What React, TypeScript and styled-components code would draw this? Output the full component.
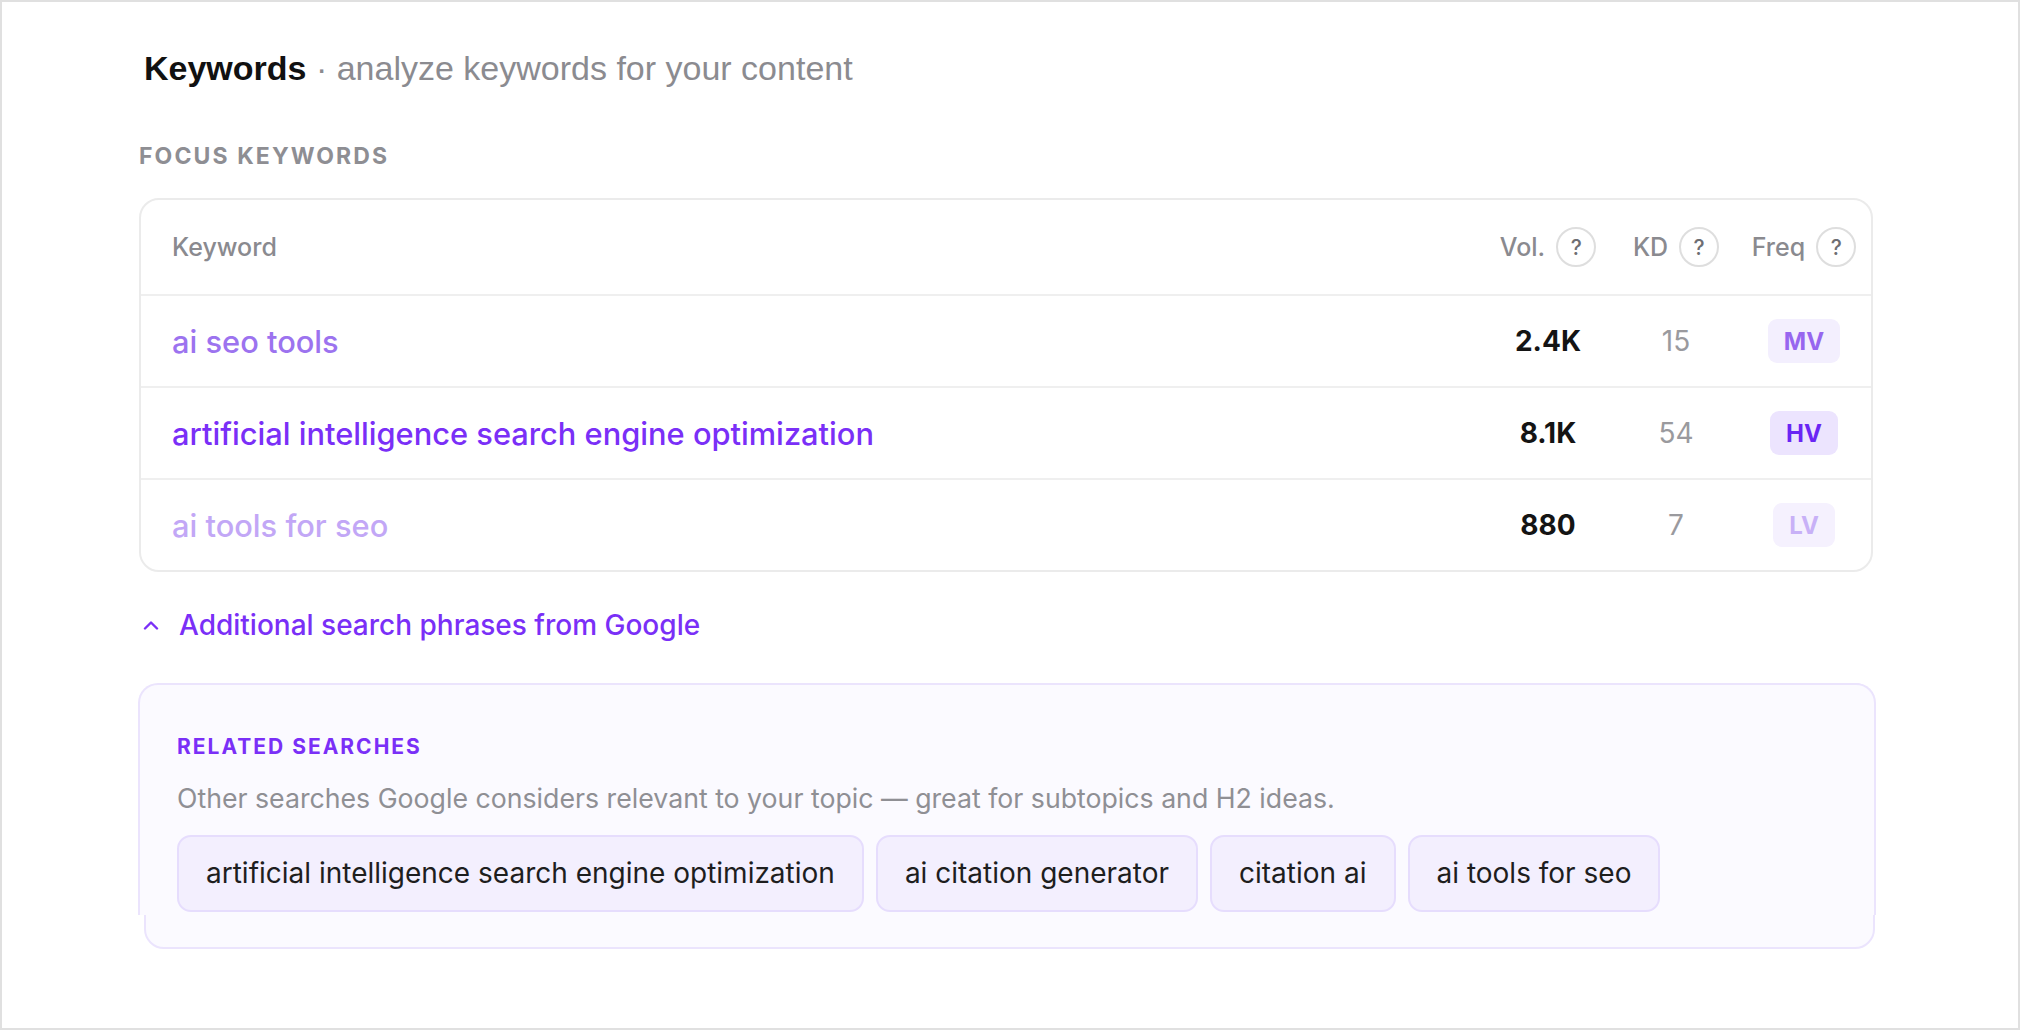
import React, { FC } from "react";
import styled, { createGlobalStyle } from "styled-components";

const GlobalStyle = createGlobalStyle`
  html, body {
    margin: 0;
    padding: 0;
    background: #ffffff;
  }
  * {
    box-sizing: border-box;
  }
`;

const Frame = styled.main`
  width: 2020px;
  height: 1030px;
  border: 2px solid #e0e0e0;
  background: #ffffff;
  padding: 46px 0 0 137px;
  font-family: Inter, "Liberation Sans", sans-serif;
`;

const Content = styled.div`
  width: 1734px;
  display: flex;
  flex-direction: column;
`;

const Title = styled.h1`
  margin: 0 0 0 5px;
  font-family: "Liberation Sans", Arial, sans-serif;
  font-size: 34px;
  line-height: 40px;
  font-weight: 400;
  color: #8b8b90;

  strong {
    color: #111111;
    font-weight: 700;
  }
`;

const SectionLabel = styled.h2<{ $accent?: boolean }>`
  margin: 0;
  font-size: ${p => (p.$accent ? "21px" : "23px")};
  line-height: ${p => (p.$accent ? "24px" : "28px")};
  font-weight: 700;
  letter-spacing: ${p => (p.$accent ? "2px" : "2.1px")};
  text-transform: uppercase;
  color: ${p => (p.$accent ? "#7a2ff7" : "#8e8e93")};
`;

const FocusLabel = styled(SectionLabel)`
  margin-top: 54px;
`;

const Table = styled.section`
  margin-top: 28px;
  border: 2px solid #ebebeb;
  border-radius: 20px;
  overflow: hidden;
`;

const Row = styled.div<{ $head?: boolean }>`
  display: grid;
  grid-template-columns: 1fr 128px 128px 128px;
  align-items: center;
  height: ${p => (p.$head ? "96px" : "92px")};
  padding: 0 3px 0 31px;
  border-bottom: 2px solid #efefef;

  &:last-child {
    border-bottom: none;
    height: 90px;
  }
`;

const HeadCell = styled.div<{ $center?: boolean }>`
  display: flex;
  align-items: center;
  justify-content: ${p => (p.$center ? "center" : "flex-start")};
  gap: 11px;
  font-size: 25px;
  font-weight: 500;
  color: #8a8a8f;
`;

const Help = styled.span`
  width: 40px;
  height: 40px;
  border: 2px solid #dedede;
  border-radius: 50%;
  display: inline-flex;
  align-items: center;
  justify-content: center;
  font-size: 21px;
  font-weight: 500;
  color: #6e6e73;
`;

const KeywordText = styled.div<{ $tone: string }>`
  font-size: 30.8px;
  font-weight: 500;
  color: ${p => p.$tone};
`;

const Volume = styled.div`
  text-align: center;
  font-size: 28px;
  font-weight: 700;
  color: #141414;
`;

const Difficulty = styled.div`
  text-align: center;
  font-size: 28px;
  font-weight: 400;
  color: #9a9a9e;
`;

const BadgeCell = styled.div`
  display: flex;
  justify-content: center;
`;

const Badge = styled.span<{ $bg: string; $fg: string }>`
  height: 44px;
  padding: 0 16px;
  border-radius: 9px;
  display: inline-flex;
  align-items: center;
  font-size: 24px;
  font-weight: 700;
  background: ${p => p.$bg};
  color: ${p => p.$fg};
`;

const Toggle = styled.button`
  margin: 36px 0 0 4px;
  padding: 0;
  border: none;
  background: none;
  display: flex;
  align-items: center;
  gap: 20px;
  font-family: inherit;
  font-size: 28px;
  line-height: 34px;
  font-weight: 500;
  color: #7a2ff7;
  cursor: pointer;
  align-self: flex-start;
`;

const RelatedShell = styled.section`
  margin: 41px -2px 0 5px;
  border: 2px solid #ebe4fd;
  border-radius: 20px;
  background: #fbfaff;
  padding-bottom: 32px;
`;

const RelatedBody = styled.div`
  margin: -2px -3px 0 -8px;
  border: 2px solid #ebe4fd;
  border-bottom: none;
  border-radius: 20px 20px 0 0;
  background: #fbfaff;
  padding: 50px 36px 3px 37px;
`;

const Description = styled.p`
  margin: 23px 0 0;
  font-size: 26.7px;
  line-height: 32px;
  color: #8f8f94;
`;

const Chips = styled.div`
  margin-top: 21px;
  display: flex;
  flex-wrap: wrap;
  gap: 12px;
`;

const Chip = styled.span`
  padding: 20px 27px;
  border: 2px solid #e6ddfd;
  border-radius: 14px;
  background: #f3effe;
  font-size: 28px;
  line-height: 33px;
  color: #1e1e1e;
`;

const Chevron: FC = () => (
  <svg width="16" height="10" viewBox="0 0 16 10" fill="none">
    <path d="M2 8.5 8 2.5l6 6" stroke="#7a2ff7" strokeWidth="2.4" strokeLinecap="round" strokeLinejoin="round" />
  </svg>
);

const keywords = [
  { text: "ai seo tools", tone: "#9c73ef", vol: "2.4K", kd: "15", freq: "MV", bg: "#f3effe", fg: "#9766ef" },
  { text: "artificial intelligence search engine optimization", tone: "#7a2ff7", vol: "8.1K", kd: "54", freq: "HV", bg: "#ece4fe", fg: "#6a25f4" },
  { text: "ai tools for seo", tone: "#c2a7f6", vol: "880", kd: "7", freq: "LV", bg: "#f5f1fe", fg: "#c8b1f7" }
];

const related = [
  "artificial intelligence search engine optimization",
  "ai citation generator",
  "citation ai",
  "ai tools for seo"
];

const App: FC = () => (
  <>
    <GlobalStyle />
    <Frame>
      <Content>
        <Title>
          <strong>Keywords</strong> · analyze keywords for your content
        </Title>
        <FocusLabel>Focus keywords</FocusLabel>
        <Table>
          <Row $head>
            <HeadCell>Keyword</HeadCell>
            <HeadCell $center>
              Vol. <Help>?</Help>
            </HeadCell>
            <HeadCell $center>
              KD <Help>?</Help>
            </HeadCell>
            <HeadCell $center>
              Freq <Help>?</Help>
            </HeadCell>
          </Row>
          {keywords.map(k => (
            <Row key={k.text}>
              <KeywordText $tone={k.tone}>{k.text}</KeywordText>
              <Volume>{k.vol}</Volume>
              <Difficulty>{k.kd}</Difficulty>
              <BadgeCell>
                <Badge $bg={k.bg} $fg={k.fg}>
                  {k.freq}
                </Badge>
              </BadgeCell>
            </Row>
          ))}
        </Table>
        <Toggle>
          <Chevron />
          Additional search phrases from Google
        </Toggle>
        <RelatedShell>
          <RelatedBody>
            <SectionLabel $accent>Related searches</SectionLabel>
            <Description>
              Other searches Google considers relevant to your topic — great for subtopics and H2 ideas.
            </Description>
            <Chips>
              {related.map(r => (
                <Chip key={r}>{r}</Chip>
              ))}
            </Chips>
          </RelatedBody>
        </RelatedShell>
      </Content>
    </Frame>
  </>
);

export default App;
